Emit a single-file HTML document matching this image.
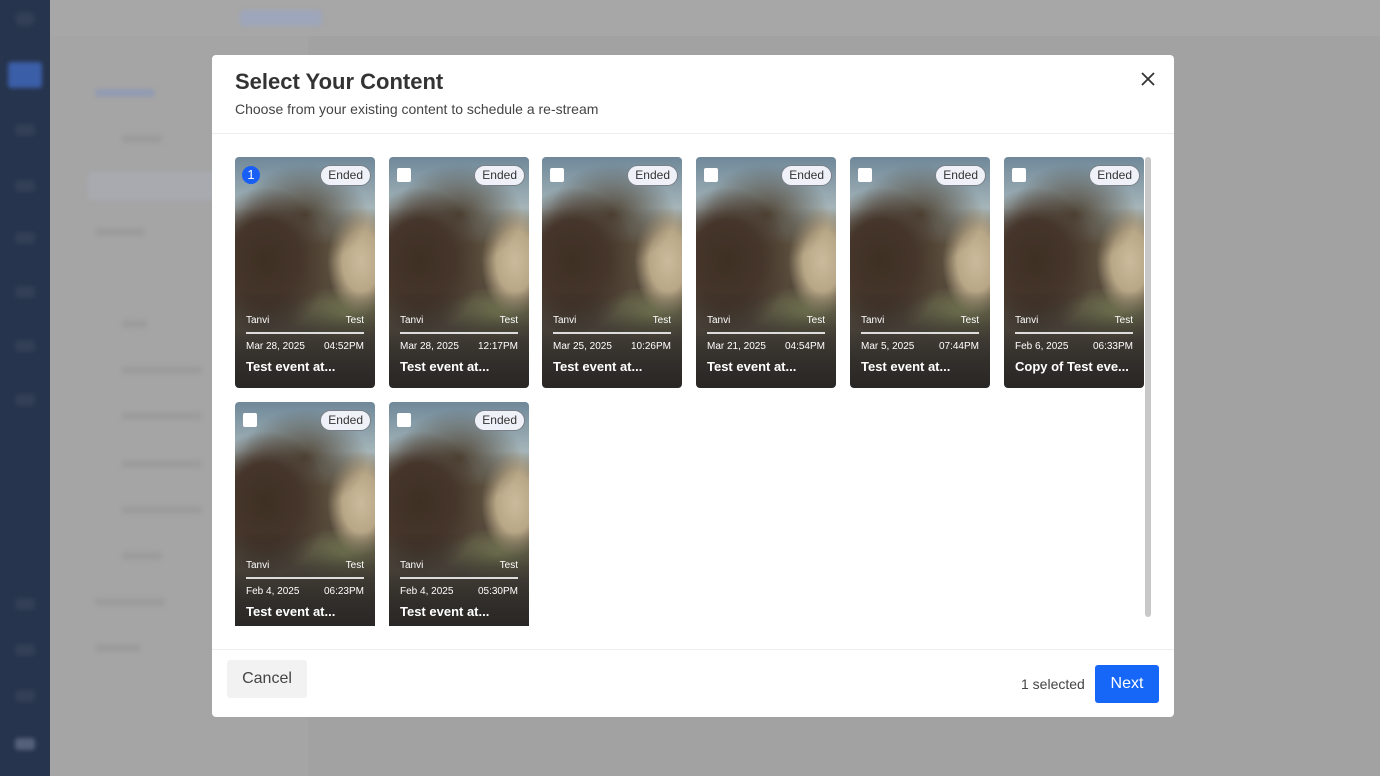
<!DOCTYPE html>
<html><head><meta charset="utf-8"><style>
*{box-sizing:border-box;margin:0;padding:0}
body{width:1380px;height:776px;overflow:hidden;background:#a2a2a2;font-family:"Liberation Sans",sans-serif;position:relative}
.side{position:absolute;left:0;top:0;width:50px;height:776px;background:#26344d}
.side i{position:absolute;left:15px;width:20px;height:12px;background:#323f56;border-radius:3px;filter:blur(2px)}
.top{position:absolute;left:50px;top:0;right:0;height:36px;background:#a7a7a7}
.lp{position:absolute;left:50px;top:36px;width:258px;bottom:0;background:#a5a5a5}
.bl{position:absolute;background:#9c9c9c;height:8px;border-radius:3px;filter:blur(2px)}
.modal{position:absolute;left:212px;top:55px;width:962px;height:662px;background:#fff;border-radius:4px}
h1{position:absolute;left:23px;top:14px;font-size:22px;font-weight:bold;color:#333}
.sub{position:absolute;left:23px;top:46px;font-size:14px;color:#444}
.x{position:absolute;left:929px;top:17px}
.hr{position:absolute;left:0;right:0;height:1px;background:#eee}
.card{position:absolute;width:140px;height:231px;border-radius:4px;overflow:hidden;
background:
linear-gradient(to bottom,rgba(0,0,0,0) 58%,rgba(30,28,26,.55) 74%,rgba(40,38,36,.95) 100%),
radial-gradient(ellipse 45% 32% at 22% 45%,#3f3024 0,#45352a 55%,rgba(70,55,42,0) 100%),
radial-gradient(ellipse 45% 22% at 50% 25%,#4d4233 0,rgba(77,66,51,0) 100%),
radial-gradient(ellipse 24% 24% at 90% 45%,#cbbb9c 0,#b8a787 55%,rgba(180,160,130,0) 100%),
radial-gradient(ellipse 40% 12% at 78% 68%,#8c9163 0,rgba(140,145,99,0) 100%),
linear-gradient(to bottom,#6f8899 0,#a5b5b9 22%,#5e513f 38%,#524739 60%,#776c5c 75%,#4a4540 100%)}
.badge{position:absolute;right:4px;top:8px;height:21px;padding:0 7px;border-radius:11px;background:#eef2f8;border:1.5px solid #7a7f88;font-size:12px;color:#333;line-height:18px}
.cb{position:absolute;left:8px;top:11px;width:14px;height:14px;background:#fff;border-radius:2px}
.num{position:absolute;left:7px;top:9px;width:18px;height:18px;border-radius:50%;background:#1a5ff5;color:#fff;font-size:13px;text-align:center;line-height:18px}
.t1{position:absolute;left:11px;right:11px;top:158px;font-size:10px;color:#fff;display:flex;justify-content:space-between}
.ln{position:absolute;left:11px;right:11px;top:175px;height:2px;background:#ddd}
.t2{position:absolute;left:11px;right:11px;top:184px;font-size:10px;color:#fff;display:flex;justify-content:space-between}
.t3{position:absolute;left:11px;top:202px;font-size:13px;color:#fff;font-weight:bold;white-space:nowrap}
.sb{position:absolute;left:933px;top:102px;width:6px;height:460px;background:#c8c8c8;border-radius:3px}
.cancel{position:absolute;left:15px;top:605px;width:80px;height:38px;background:#f2f2f2;border-radius:3px;font-size:16px;color:#444;text-align:center;line-height:38px}
.sel{position:absolute;left:809px;top:621px;font-size:14px;color:#444}
.next{position:absolute;left:883px;top:610px;width:64px;height:38px;background:#1667f7;border-radius:3px;color:#fff;font-size:16px;text-align:center;line-height:38px}
</style></head><body>
<div class="side">
<i style="top:12px;width:20px;height:14px;border-radius:7px"></i>
<i style="top:62px;left:8px;width:34px;height:26px;background:#3b5ea8"></i>
<i style="top:124px"></i><i style="top:180px"></i><i style="top:232px"></i><i style="top:286px"></i><i style="top:340px"></i><i style="top:394px"></i>
<i style="top:598px"></i><i style="top:644px"></i><i style="top:690px"></i><i style="top:738px;background:#55607a"></i>
</div>
<div class="top"></div>
<div class="lp"></div>
<div class="bl" style="left:95px;top:89px;width:60px;background:#929bb2"></div>
<div class="bl" style="left:122px;top:135px;width:40px"></div>
<div class="bl" style="left:88px;top:172px;width:200px;height:28px;background:#a8aab0"></div>
<div class="bl" style="left:95px;top:228px;width:50px"></div>
<div class="bl" style="left:122px;top:320px;width:25px"></div>
<div class="bl" style="left:122px;top:366px;width:80px"></div>
<div class="bl" style="left:122px;top:412px;width:80px"></div>
<div class="bl" style="left:122px;top:460px;width:80px"></div>
<div class="bl" style="left:122px;top:506px;width:80px"></div>
<div class="bl" style="left:122px;top:552px;width:40px"></div>
<div class="bl" style="left:95px;top:598px;width:70px"></div>
<div class="bl" style="left:95px;top:644px;width:45px"></div>
<div class="bl" style="left:240px;top:10px;width:82px;height:16px;background:#9ea6bb"></div>
<div class="modal">
<h1>Select Your Content</h1>
<div class="sub">Choose from your existing content to schedule a re-stream</div>
<svg class="x" width="14" height="14" viewBox="0 0 14 14"><path d="M1 1L13 13M13 1L1 13" stroke="#333" stroke-width="1.8"/></svg>
<div class="hr" style="top:78px"></div>
<div class="sb"></div>

<div class="card" style="left:23px;top:102px"><div class="num">1</div><div class="badge">Ended</div><div class="t1"><span>Tanvi</span><span>Test</span></div><div class="ln"></div><div class="t2"><span>Mar 28, 2025</span><span>04:52PM</span></div><div class="t3">Test event at...</div></div>
<div class="card" style="left:177px;top:102px"><div class="cb"></div><div class="badge">Ended</div><div class="t1"><span>Tanvi</span><span>Test</span></div><div class="ln"></div><div class="t2"><span>Mar 28, 2025</span><span>12:17PM</span></div><div class="t3">Test event at...</div></div>
<div class="card" style="left:330px;top:102px"><div class="cb"></div><div class="badge">Ended</div><div class="t1"><span>Tanvi</span><span>Test</span></div><div class="ln"></div><div class="t2"><span>Mar 25, 2025</span><span>10:26PM</span></div><div class="t3">Test event at...</div></div>
<div class="card" style="left:484px;top:102px"><div class="cb"></div><div class="badge">Ended</div><div class="t1"><span>Tanvi</span><span>Test</span></div><div class="ln"></div><div class="t2"><span>Mar 21, 2025</span><span>04:54PM</span></div><div class="t3">Test event at...</div></div>
<div class="card" style="left:638px;top:102px"><div class="cb"></div><div class="badge">Ended</div><div class="t1"><span>Tanvi</span><span>Test</span></div><div class="ln"></div><div class="t2"><span>Mar 5, 2025</span><span>07:44PM</span></div><div class="t3">Test event at...</div></div>
<div class="card" style="left:792px;top:102px"><div class="cb"></div><div class="badge">Ended</div><div class="t1"><span>Tanvi</span><span>Test</span></div><div class="ln"></div><div class="t2"><span>Feb 6, 2025</span><span>06:33PM</span></div><div class="t3">Copy of Test eve...</div></div>
<div class="card" style="left:23px;top:347px;height:224px;border-radius:4px 4px 0 0"><div class="cb"></div><div class="badge">Ended</div><div class="t1"><span>Tanvi</span><span>Test</span></div><div class="ln"></div><div class="t2"><span>Feb 4, 2025</span><span>06:23PM</span></div><div class="t3">Test event at...</div></div>
<div class="card" style="left:177px;top:347px;height:224px;border-radius:4px 4px 0 0"><div class="cb"></div><div class="badge">Ended</div><div class="t1"><span>Tanvi</span><span>Test</span></div><div class="ln"></div><div class="t2"><span>Feb 4, 2025</span><span>05:30PM</span></div><div class="t3">Test event at...</div></div>

<div class="hr" style="top:594px"></div>
<div class="cancel">Cancel</div>
<div class="sel">1 selected</div>
<div class="next">Next</div>
</div>
</body></html>
